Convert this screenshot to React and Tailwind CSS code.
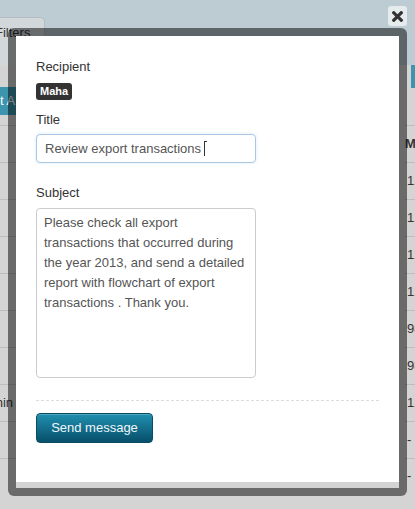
import React from "react";

const filas = ["12", "12", "12", "12", "98", "98", "12", "--", ""];

const mensaje =
  "Please check all export\ntransactions that occurred during\nthe year 2013, and send a detailed\nreport with flowchart of export\ntransactions . Thank you.";

function FondoPagina() {
  return (
    <div className="flex flex-col h-full">
      {/* barra superior con la pestaña de filtros */}
      <div className="h-[65px] shrink-0 bg-[#bdcbd2] flex items-end">
        <div className="ml-[-14px] w-[59px] h-[48px] rounded-tr-[5px] border border-b-0 border-[#b3bcc0] bg-[#d2d8da] pl-[8px] pt-[6px] text-[13px] leading-[18px] text-[#333]">
          Filters
        </div>
      </div>

      <div className="flex-1 flex justify-between bg-[#d4d4d4]">
        {/* columna izquierda */}
        <div className="w-[30px] flex flex-col">
          <div className="h-[60px] pt-[22px]">
            <div className="ml-[-20px] h-[28px] w-[36px] bg-[#3d95ad] pl-[20px] text-[13px] leading-[28px] text-white">
              t A
            </div>
          </div>
          {filas.concat([""]).map((_, i) => (
            <div key={i} className="h-[37px] shrink-0 flex justify-end whitespace-nowrap border-t border-[#bdbdbd] pr-[17px] text-[13px] leading-[36px] text-[#333]">
              {i === 7 ? "Within" : ""}
            </div>
          ))}
        </div>

        {/* columna derecha */}
        <div className="w-[10px] flex flex-col">
          <div className="h-[60px]">
            <div className="ml-[6px] h-[23px] w-[10px] bg-[#3d95ad]"></div>
          </div>
          <div className="h-[37px] shrink-0 border-t border-[#bdbdbd] text-[13px] font-bold leading-[36px] text-[#333]">M</div>
          {filas.map((v, i) => (
            <div key={i} className="h-[37px] shrink-0 border-t border-[#bdbdbd] pl-[2px] text-[13px] leading-[36px] text-[#333]">
              {v}
            </div>
          ))}
        </div>
      </div>
    </div>
  );
}

export default function App() {
  return (
    <div className="relative w-[415px] h-[509px] overflow-hidden bg-[#d4d4d4] font-['Liberation_Sans',Arial,sans-serif]">
      <FondoPagina />

      {/* --- MODAL --- */}
      <div className="absolute left-[8px] top-[28px] w-[399px] h-[468px] rounded-[6px] bg-black/50 p-[8px]">
        <div className="h-full bg-[#d3d3d3]">
          <div className="h-[446px] bg-white px-[20px] pt-[22px]">
            <div className="text-[13px] leading-[18px] text-[#333]">Recipient</div>
            <div className="mt-[7px] flex">
              <span className="rounded-[3px] bg-[#333] px-[4px] py-[2px] text-[11px] font-bold leading-[13px] text-white">
                Maha
              </span>
            </div>

            <div className="mt-[11px] text-[13px] leading-[18px] text-[#333]">Title</div>
            <div className="mt-[5px] flex h-[29px] w-[220px] items-center rounded-[4px] border border-[#a9c6e3] pl-[8px] text-[13px] text-[#555] shadow-[0_0_3px_rgba(82,168,236,0.25)]">
              <span>Review export transactions</span>
              <span className="ml-[3px] flex h-[15px] flex-col items-start">
                <span className="h-[1px] w-[3px] bg-[#333]"></span>
                <span className="h-[14px] w-[1px] bg-[#333]"></span>
              </span>
            </div>

            <div className="mt-[21px] text-[13px] leading-[18px] text-[#333]">Subject</div>
            <textarea
              readOnly
              wrap="off"
              value={mensaje}
              className="mt-[6px] block h-[170px] w-[220px] resize-none overflow-hidden rounded-[4px] border border-[#cccccc] px-[7px] pt-[4px] text-[13px] leading-[20px] text-[#555] outline-none"
            />

            <div className="mt-[22px] border-t border-dashed border-[#dddddd]"></div>

            <button className="mt-[12px] h-[30px] w-[117px] rounded-[4px] border border-[#0a4c63] bg-gradient-to-b from-[#2190b0] to-[#07506b] text-[13px] text-[#eef7fa] shadow-[inset_0_1px_0_rgba(255,255,255,0.2)]">
              Send message
            </button>
          </div>
        </div>
      </div>

      {/* botón de cerrar */}
      <div className="absolute left-[388px] top-[6px] flex h-[20px] w-[19px] items-center justify-center rounded-[3px] bg-[#e6ebed]">
        <svg width="11" height="11" viewBox="0 0 11 11">
          <path d="M1.8 1.8 L9.2 9.2 M9.2 1.8 L1.8 9.2" stroke="#333" strokeWidth="3.2" strokeLinecap="square" />
        </svg>
      </div>
    </div>
  );
}
